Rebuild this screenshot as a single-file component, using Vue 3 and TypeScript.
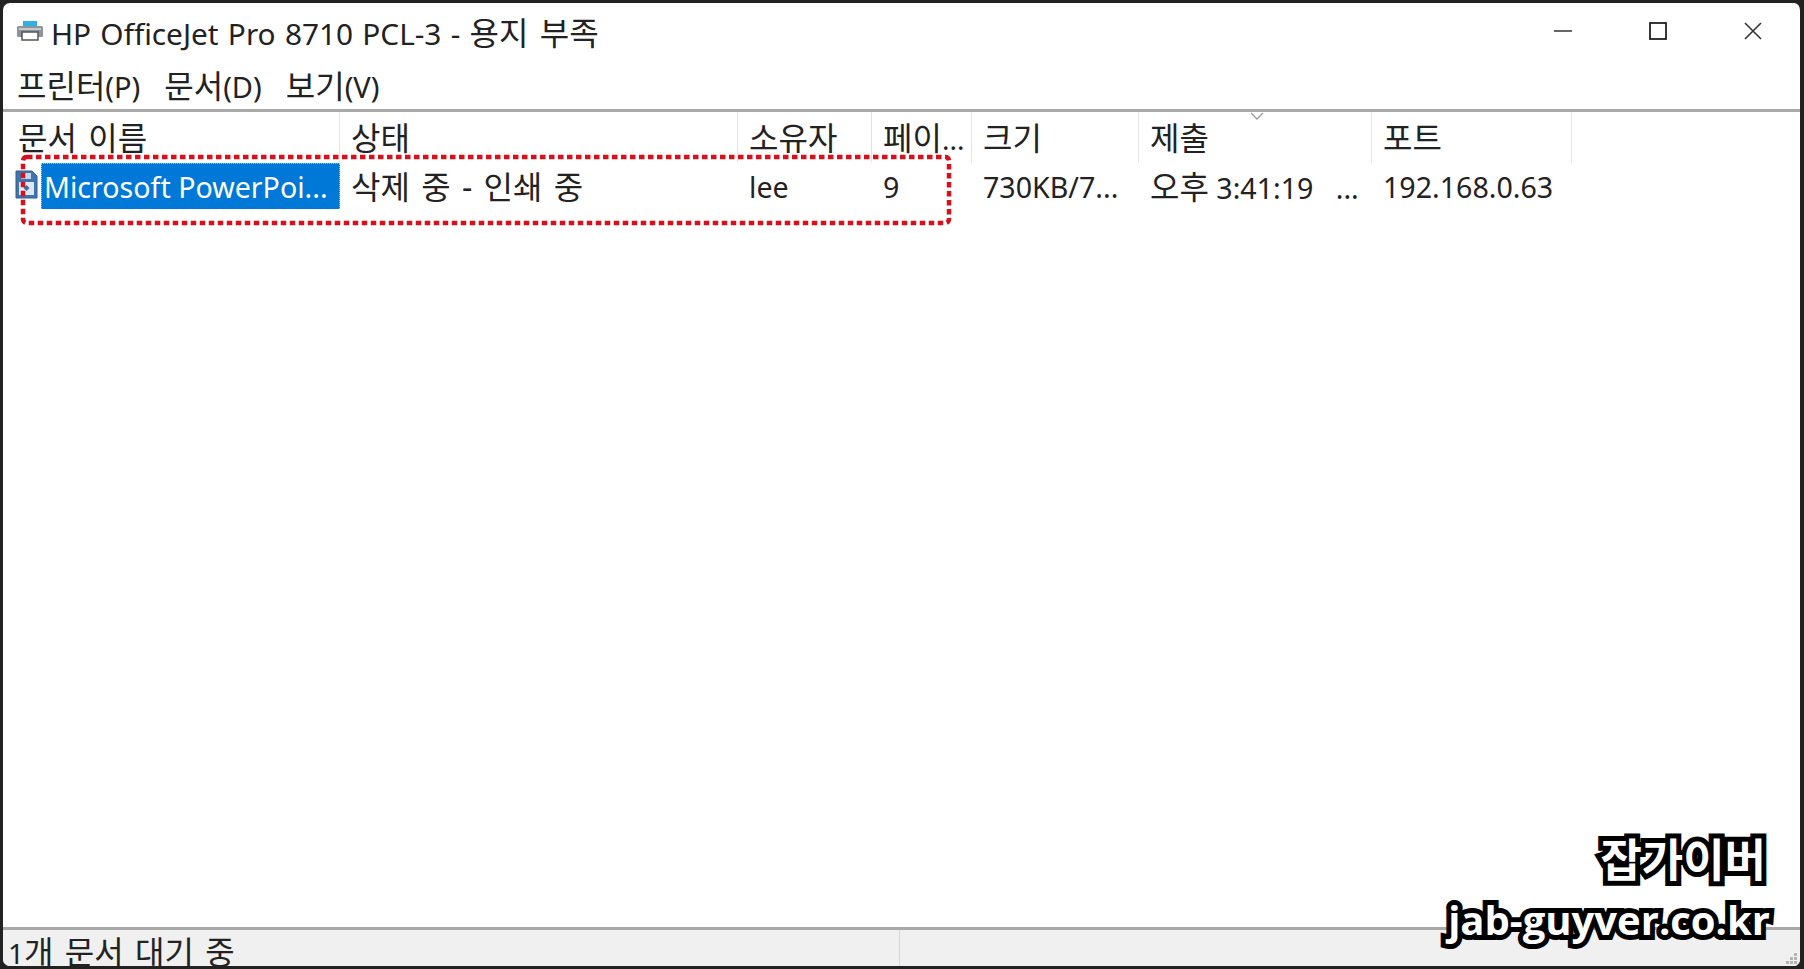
<script setup lang="ts">
interface Column {
  label: string;
  width: number;
  value: string;
}

const columns: Column[] = [
  { label: '문서 이름', width: 337, value: 'Microsoft PowerPoi...' },
  { label: '상태', width: 398, value: '삭제 중 - 인쇄 중' },
  { label: '소유자', width: 134, value: 'lee' },
  { label: '페이...', width: 100, value: '9' },
  { label: '크기', width: 167, value: '730KB/7...' },
  { label: '제출', width: 233, value: '오후 3:41:19   ...' },
  { label: '포트', width: 200, value: '192.168.0.63' },
]

const menus = ['프린터(P)', '문서(D)', '보기(V)']
const gripDots = [[12, 0], [8, 4], [12, 4], [4, 8], [8, 8], [12, 8]]

// hangul runs are drawn a bit larger than latin, like Malgun Gothic next to Segoe UI
const hangul = /([\uAC00-\uD7A3]+(?:[ -]+[\uAC00-\uD7A3]+)*)/
const parts = (s: string) => s.split(hangul).filter(Boolean)
const isKo = (s: string) => /[\uAC00-\uD7A3]/.test(s)
</script>

<template>
  <div class="window">
    <div class="titlebar">
      <svg class="printer" width="28" height="24" viewBox="0 0 28 24">
        <rect x="7" y="2" width="14" height="6" fill="#2fb0e0" />
        <rect x="1" y="7" width="26" height="11" rx="1.5" fill="#8d959c" />
        <rect x="3" y="9" width="22" height="2" fill="#c4c9cd" />
        <rect x="6" y="13" width="16" height="8" fill="#fff" stroke="#555" stroke-width="1.5" />
      </svg>
      <span class="title">
        <span v-for="p in parts('HP OfficeJet Pro 8710 PCL-3 - 용지 부족')" :key="p" :class="{ ko: isKo(p) }">{{ p }}</span>
      </span>
      <div class="controls">
        <svg width="18" height="18" viewBox="0 0 18 18"><path d="M0 9h18" stroke="#333" stroke-width="1.6" /></svg>
        <svg width="18" height="18" viewBox="0 0 18 18"><rect x="1" y="1" width="16" height="16" fill="none" stroke="#222" stroke-width="1.8" /></svg>
        <svg width="18" height="18" viewBox="0 0 18 18"><path d="M1 1l16 16M17 1L1 17" stroke="#333" stroke-width="1.6" /></svg>
      </div>
    </div>

    <div class="menubar">
      <span v-for="m in menus" :key="m">
        <span v-for="p in parts(m)" :key="p" :class="{ ko: isKo(p) }">{{ p }}</span>
      </span>
    </div>

    <div class="list">
      <div class="header">
        <div v-for="c in columns" :key="c.label" class="hcell" :style="{ width: c.width + 'px' }">
          <span v-for="p in parts(c.label)" :key="p" :class="{ ko: isKo(p) }">{{ p }}</span>
        </div>
        <svg class="sort" width="14" height="8" viewBox="0 0 14 8"><path d="M1 1l6 6 6-6" fill="none" stroke="#999" stroke-width="1.3" /></svg>
      </div>
      <div class="row">
        <div v-for="(c, i) in columns" :key="c.label" class="cell" :class="{ first: i === 0 }" :style="{ width: c.width + 'px' }">
          <svg v-if="i === 0" class="doc" width="23" height="29" viewBox="0 0 23 29">
            <path d="M1 1h16l5 5v22H1z" fill="#3f74ad" stroke="#2f5f92" />
            <rect x="6" y="3" width="10" height="6" fill="#c4d8ea" />
            <rect x="4" y="12" width="15" height="13" fill="#dfe9f3" />
            <path d="M11.5 15l3 3-3 3-3-3z" fill="#3a6ea5" />
          </svg>
          <span :class="{ selected: i === 0 }">
            <span v-for="p in parts(c.value)" :key="p" :class="{ ko: isKo(p) }">{{ p }}</span>
          </span>
        </div>
      </div>
      <svg class="annotation" width="934" height="74" viewBox="0 0 934 74">
        <rect x="3" y="3" width="926" height="66" rx="4" fill="none" stroke="#d8101c" stroke-width="4.5" stroke-dasharray="5.5 3.5" />
      </svg>
    </div>

    <div class="statusbar">
      <div class="status-left">
        <span v-for="p in parts('1개 문서 대기 중')" :key="p" :class="{ ko: isKo(p) }">{{ p }}</span>
      </div>
      <div class="status-right">
        <svg class="grip" width="16" height="12" viewBox="0 0 16 12">
          <rect v-for="d in gripDots" :key="d.join()" :x="d[0]" :y="d[1]" width="3" height="3" fill="#b4b4b4" />
        </svg>
      </div>
    </div>

    <div class="watermark">
      <div class="wm-name">잡가이버</div>
      <div class="wm-url">jab-guyver.co.kr</div>
    </div>
  </div>
</template>

<style>
html, body { margin: 0; background: #222; overflow: hidden; }
</style>

<style scoped>
.window {
  position: relative;
  width: 1804px;
  height: 969px;
  box-sizing: border-box;
  border: solid #222;
  border-width: 3px 4px 3px 3px;
  border-radius: 10px;
  background: #fff;
  display: flex;
  flex-direction: column;
  overflow: hidden;
  font-family: "Noto Sans", "Noto Sans CJK KR", sans-serif;
  color: #222;
}
.ko { font-size: 32px; word-spacing: 3px; }
.titlebar {
  height: 60px;
  display: flex;
  align-items: center;
  padding-left: 13px;
  flex-shrink: 0;
}
.printer { margin-right: 7px; margin-bottom: 4px; }
.title { font-size: 29.8px; line-height: 40px; word-spacing: 1.5px; }
.controls {
  margin-left: auto;
  display: flex;
  gap: 77px;
  padding-right: 38px;
  margin-bottom: 4px;
}
.menubar {
  height: 49px;
  display: flex;
  gap: 24px;
  align-items: center;
  padding: 0 0 0 14px;
  font-size: 29px;
  line-height: 40px;
  border-bottom: 3px solid #a9a9a9;
  box-sizing: border-box;
  flex-shrink: 0;
}
.list {
  position: relative;
  flex: 1;
  min-height: 0;
}
.header {
  position: relative;
  display: flex;
  height: 50px;
  font-size: 28px;
}
.hcell {
  box-sizing: border-box;
  padding: 6px 0 0 11px;
  border-right: 1px solid #e3e3e3;
  white-space: nowrap;
  overflow: hidden;
  line-height: 40px;
}
.hcell:first-child { padding-left: 15px; }
.sort { position: absolute; left: 1247px; top: 0; }
.row {
  display: flex;
  height: 46px;
  margin-top: 1px;
  font-size: 28.6px;
}
.cell {
  box-sizing: border-box;
  padding-left: 11px;
  white-space: pre;
  overflow: hidden;
  line-height: 48px;
}
.cell.first {
  display: flex;
  padding-left: 12px;
  align-items: flex-start;
}
.doc { margin-top: 7px; flex-shrink: 0; margin-right: 3px; }
.selected {
  flex: 1;
  background: #0078d7;
  color: #fff;
  padding-left: 3px;
  outline: 1px dotted #9cc8ee;
  outline-offset: -1px;
}
.annotation {
  position: absolute;
  left: 17px;
  top: 42px;
  pointer-events: none;
}
.statusbar {
  height: 39px;
  flex-shrink: 0;
  background: #f0f0f0;
  border-top: 3px solid #a9a9a9;
  box-sizing: border-box;
  display: flex;
  font-size: 28px;
  overflow: hidden;
}
.status-left {
  width: 897px;
  padding: 2px 0 0 5px;
  box-sizing: border-box;
  line-height: 40px;
  white-space: nowrap;
  border-right: 1px solid #d5d5d5;
}
.status-right { flex: 1; position: relative; }
.grip { position: absolute; right: 2px; bottom: 1px; }
.watermark {
  position: absolute;
  right: 30px;
  bottom: 26px;
  text-align: right;
  color: #fff;
  font-weight: 700;
  -webkit-text-stroke: 10px #000;
  paint-order: stroke fill;
  line-height: 1;
}
.wm-name { font-size: 45px; margin-right: 4px; margin-bottom: 18px; }
.wm-url { font-size: 40px; font-family: "Open Sans", sans-serif; }
</style>
